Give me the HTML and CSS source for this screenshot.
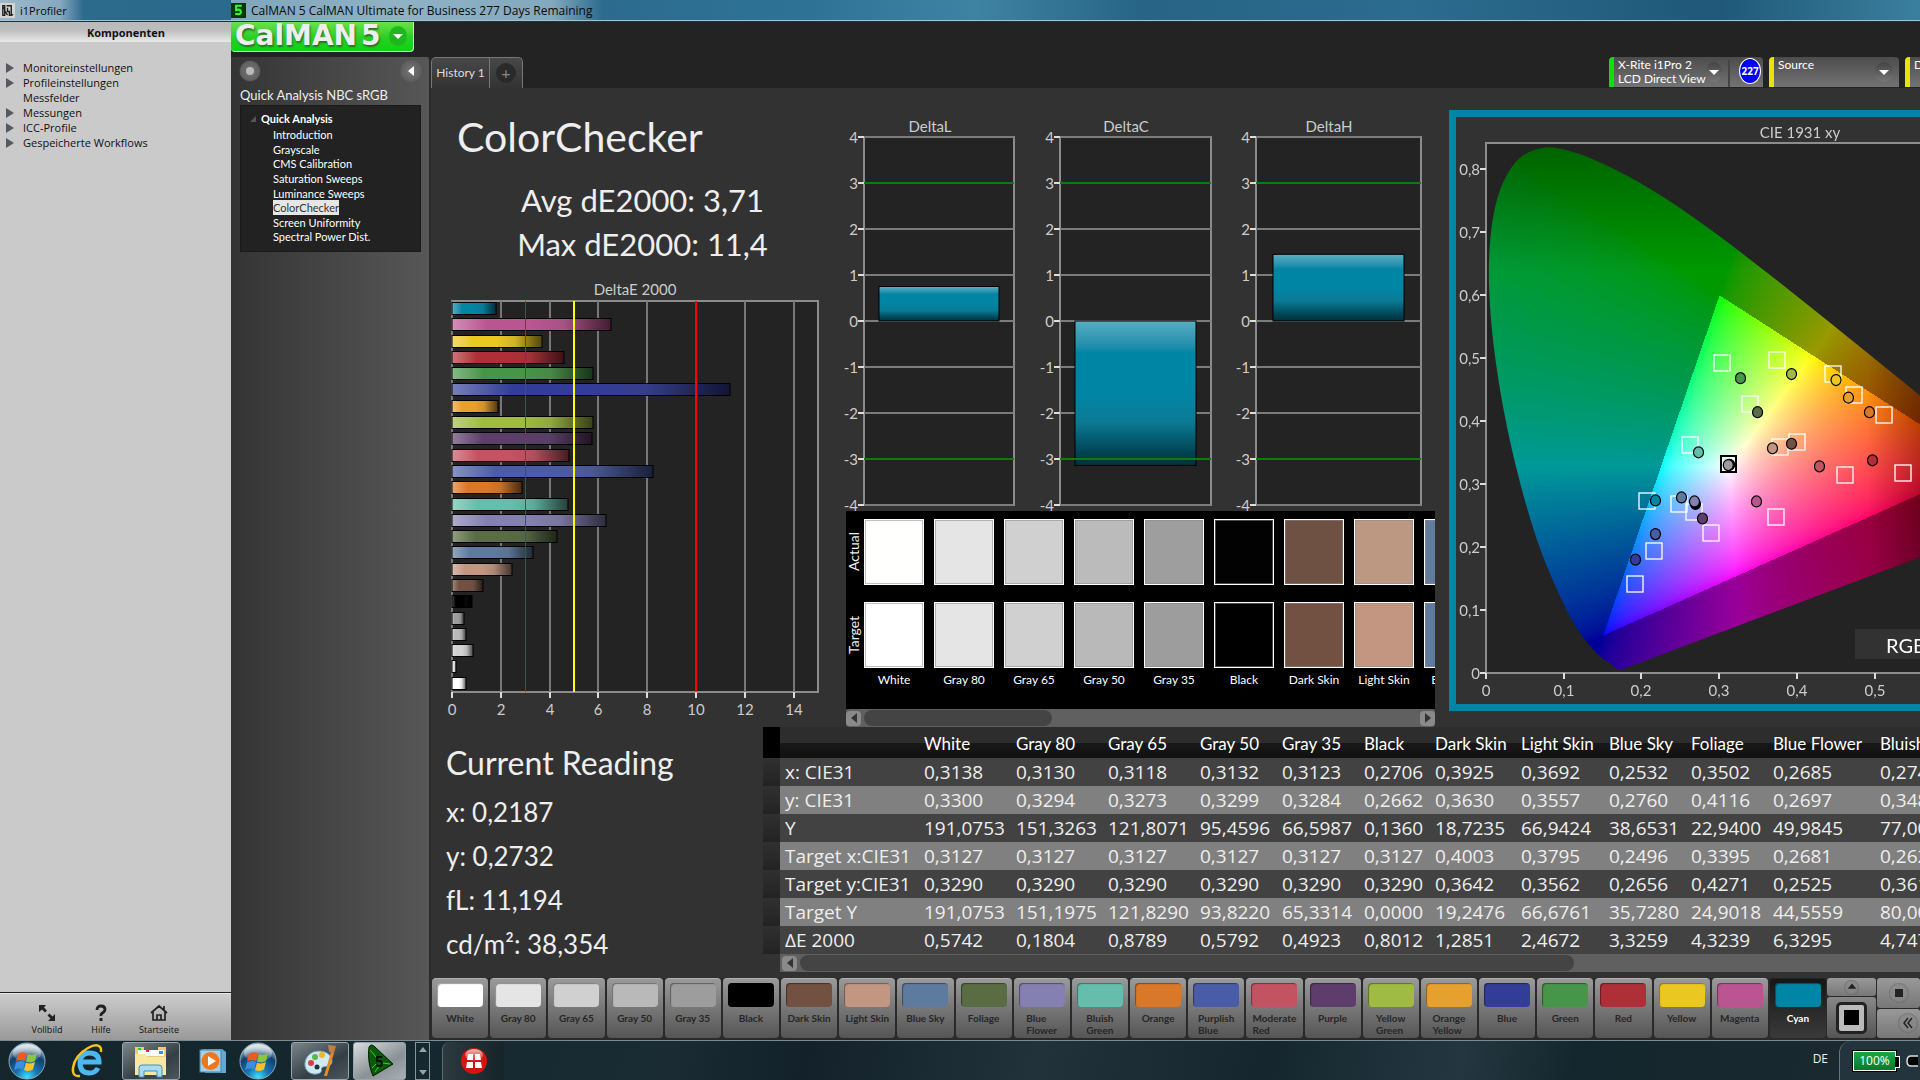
FILE: index.html
```html
<!DOCTYPE html>
<html lang="de">
<head>
<meta charset="utf-8">
<title>CalMAN 5 – ColorChecker</title>
<link rel="stylesheet" href="styles.css">
</head>
<body>
<svg class="defs" aria-hidden="true">
  <defs>
    <radialGradient id="orb" cx="50%" cy="95%" r="85%"><stop offset="0" stop-color="#3fe0ff"/><stop offset=".35" stop-color="#1678b4"/><stop offset=".75" stop-color="#123f6c"/><stop offset="1" stop-color="#9fb6c6"/></radialGradient>
    <linearGradient id="shine" x1="0" y1="0" x2="0" y2="1"><stop offset="0" stop-color="#fff" stop-opacity=".7"/><stop offset="1" stop-color="#fff" stop-opacity=".08"/></linearGradient>
    <symbol id="start" viewBox="0 0 38 38">
      <circle cx="19" cy="19" r="18" fill="url(#orb)" stroke="#8fa9ba" stroke-width="1"/>
      <ellipse cx="19" cy="11" rx="14" ry="9" fill="url(#shine)"/>
      <path d="M10 12q4-3 9-.5l-2 7.500q-4-2-9 .5z" fill="#ee5a24"/>
      <path d="M20 12q4 2 9-.5l-2 7.500q-4 2.500-9 .5z" fill="#8cc63f"/>
      <path d="M8 20.500q4-2.500 9-.5l-2 7.500q-4-2-9 .5z" fill="#3d8ee0"/>
      <path d="M18 20.500q4 2 9-.5l-2 7.500q-4 2.500-9 .5z" fill="#fbc02d"/>
    </symbol>
  </defs>
</svg>
<div class="desktop">
  <aside class="profiler">
    <header class="titlebar">
      <svg class="app-icon" viewBox="0 0 16 16"><rect width="16" height="16" fill="#d4d4d4"/><path d="M3 3h2v2H3zM3 6h2v7H3zM7 3h5v10h-2V9H8V5M5 8l3 5M12 12l2 1" fill="none" stroke="#222" stroke-width="1.500"/></svg>
      <span>i1Profiler</span>
    </header>
    <h2 class="profiler-head">Komponenten</h2>
    <ul class="profiler-list">
      <li class="branch">Monitoreinstellungen</li>
      <li class="branch">Profileinstellungen</li>
      <li>Messfelder</li>
      <li class="branch">Messungen</li>
      <li class="branch">ICC-Profile</li>
      <li class="branch">Gespeicherte Workflows</li>
    </ul>
    <footer class="profiler-foot">
      <button class="foot-btn"><svg viewBox="0 0 18 18"><path d="M1 1h7L6 3.500l3 3-2 2-3-3L1 8zM17 17h-7l2.500-2.500-3-3 2-2 3 3L17 10z" fill="#222"/></svg>Vollbild</button>
      <button class="foot-btn"><svg viewBox="0 0 18 18"><path d="M5 6q0-4 4-4t4 3.500q0 2-2.200 3.300T9 12" fill="none" stroke="#222" stroke-width="2.800"/><rect x="7.500" y="14" width="3" height="3" fill="#222"/></svg>Hilfe</button>
      <button class="foot-btn"><svg viewBox="0 0 18 18"><path d="M1 9l8-7 8 7M3 8v8h12V8M7 16v-5h4v5M14 6V2" fill="none" stroke="#222" stroke-width="1.700"/></svg>Startseite</button>
    </footer>
  </aside>

  <div class="calman">
    <header class="titlebar wide">
      <svg class="app-icon" viewBox="0 0 16 16"><rect width="16" height="16" fill="#063806"/><path d="M11.500 3H5.500v4.500q5-1.500 5 2t-6 2" fill="none" stroke="#3f3" stroke-width="2.200"/></svg>
      <span>CalMAN 5 CalMAN Ultimate for Business 277 Days Remaining</span>
    </header>
    <div class="workspace">
      <nav class="topbar">
        <button class="logo"><span class="logo-name">CalMAN</span><span class="logo-name">5</span><span class="logo-drop"><i class="caret"></i></span></button>
      </nav>
      <aside class="sidebar">
        <div class="side-tools">
          <button class="round record" aria-label="Record"></button>
          <button class="round collapse" aria-label="Collapse"></button>
        </div>
        <h3 class="side-title">Quick Analysis NBC sRGB</h3>
        <ul class="tree">
          <li class="tree-head">Quick Analysis</li>
          <li><a href="#">Introduction</a></li>
          <li><a href="#">Grayscale</a></li>
          <li><a href="#">CMS Calibration</a></li>
          <li><a href="#">Saturation Sweeps</a></li>
          <li><a href="#">Luminance Sweeps</a></li>
          <li><a href="#" class="current">ColorChecker</a></li>
          <li><a href="#">Screen Uniformity</a></li>
          <li><a href="#">Spectral Power Dist.</a></li>
        </ul>
      </aside>
      <div class="tabs">
        <div class="history"><button class="tab">History 1</button><button class="tab add"><span>+</span></button></div>
        <div class="devices">
          <button class="device meter"><span>X-Rite i1Pro 2<br>LCD Direct View</span><span class="drop"><i class="caret"></i></span><b class="badge">227</b></button>
          <button class="device source"><span>Source</span><span class="drop"><i class="caret"></i></span></button>
          <button class="device display"><span>Display</span></button>
        </div>
      </div>

      <main class="board">
        <section class="upper">
          <div class="col-summary">
            <h1>ColorChecker</h1>
            <p class="stat">Avg dE2000: 3,71</p>
            <p class="stat">Max dE2000: 11,4</p>
            <svg id="de-chart" class="de-chart" width="400" height="446"></svg>
          </div>
          <div class="col-delta">
            <div class="deltas">
              <svg id="delta-l" width="196" height="423"></svg>
              <svg id="delta-c" width="196" height="423"></svg>
              <svg id="delta-h" width="204" height="423"></svg>
            </div>
            <div class="compare">
              <div class="compare-view">
                <div class="sides"><span>Actual</span><span>Target</span></div>
                <div id="pairs" class="pairs"></div>
              </div>
              <div class="scroll short"><button class="arrow left" aria-label="Left"></button><i class="thumb"></i><button class="arrow right" aria-label="Right"></button></div>
            </div>
          </div>
          <div class="cie">
            <canvas id="cie-fill" width="700" height="587"></canvas>
            <svg id="cie-chart" width="700" height="587"></svg>
          </div>
        </section>

        <section class="lower">
          <div class="reading">
            <h2>Current Reading</h2>
            <p>x: 0,2187</p>
            <p>y: 0,2732</p>
            <p>fL: 11,194</p>
            <p>cd/m²: 38,354</p>
          </div>
          <div class="data">
            <table>
              <colgroup><col class="c-grip"><col class="c-name"><col class="c92"><col class="c92"><col class="c92"><col class="c82"><col class="c82"><col class="c71"><col class="c86"><col class="c88"><col class="c82"><col class="c82"><col class="c107"><col class="c107"></colgroup>
              <thead><tr><th class="grip"></th><th></th><th>White</th><th>Gray 80</th><th>Gray 65</th><th>Gray 50</th><th>Gray 35</th><th>Black</th><th>Dark Skin</th><th>Light Skin</th><th>Blue Sky</th><th>Foliage</th><th>Blue Flower</th><th>Bluish Green</th></tr></thead>
              <tbody>
                <tr><td class="grip"></td><th>x: CIE31</th><td>0,3138</td><td>0,3130</td><td>0,3118</td><td>0,3132</td><td>0,3123</td><td>0,2706</td><td>0,3925</td><td>0,3692</td><td>0,2532</td><td>0,3502</td><td>0,2685</td><td>0,2745</td></tr>
                <tr><td class="grip"></td><th>y: CIE31</th><td>0,3300</td><td>0,3294</td><td>0,3273</td><td>0,3299</td><td>0,3284</td><td>0,2662</td><td>0,3630</td><td>0,3557</td><td>0,2760</td><td>0,4116</td><td>0,2697</td><td>0,3486</td></tr>
                <tr><td class="grip"></td><th>Y</th><td>191,0753</td><td>151,3263</td><td>121,8071</td><td>95,4596</td><td>66,5987</td><td>0,1360</td><td>18,7235</td><td>66,9424</td><td>38,6531</td><td>22,9400</td><td>49,9845</td><td>77,0012</td></tr>
                <tr><td class="grip"></td><th>Target x:CIE31</th><td>0,3127</td><td>0,3127</td><td>0,3127</td><td>0,3127</td><td>0,3127</td><td>0,3127</td><td>0,4003</td><td>0,3795</td><td>0,2496</td><td>0,3395</td><td>0,2681</td><td>0,2626</td></tr>
                <tr><td class="grip"></td><th>Target y:CIE31</th><td>0,3290</td><td>0,3290</td><td>0,3290</td><td>0,3290</td><td>0,3290</td><td>0,3290</td><td>0,3642</td><td>0,3562</td><td>0,2656</td><td>0,4271</td><td>0,2525</td><td>0,3616</td></tr>
                <tr><td class="grip"></td><th>Target Y</th><td>191,0753</td><td>151,1975</td><td>121,8290</td><td>93,8220</td><td>65,3314</td><td>0,0000</td><td>19,2476</td><td>66,6761</td><td>35,7280</td><td>24,9018</td><td>44,5559</td><td>80,0034</td></tr>
                <tr><td class="grip"></td><th>ΔE 2000</th><td>0,5742</td><td>0,1804</td><td>0,8789</td><td>0,5792</td><td>0,4923</td><td>0,8012</td><td>1,2851</td><td>2,4672</td><td>3,3259</td><td>4,3239</td><td>6,3295</td><td>4,7473</td></tr>
              </tbody>
            </table>
            <div class="scroll long"><button class="arrow left" aria-label="Left"></button><i class="thumb"></i></div>
          </div>
        </section>

        <section class="strip">
          <div id="patches" class="patches"></div>
          <div class="pager">
            <button class="pager-up" aria-label="Up"><span class="knob"><svg viewBox="0 0 16 16"><path d="M8 4l5 6H3z" fill="#222"/></svg></span></button>
            <button class="pager-view" aria-label="Pattern"><span class="pattern"></span></button>
          </div>
          <div class="controls">
            <button aria-label="Stop"><span class="knob"><svg viewBox="0 0 16 16"><rect x="4" y="4" width="8" height="8" fill="#222"/></svg></span></button>
            <button aria-label="Back" class="back"><span class="knob"><svg viewBox="0 0 16 16"><path d="M8 3L4 8l4 5M12 3L8 8l4 5" fill="none" stroke="#222" stroke-width="1.500"/></svg></span></button>
          </div>
        </section>
      </main>
    </div>
  </div>

  <footer class="taskbar">
    <div class="task-left">
      <button class="task" aria-label="Start"><svg width="38" height="38"><use href="#start"/></svg></button>
      <button class="task" aria-label="Internet Explorer"><svg width="34" height="36" viewBox="0 0 34 36"><path d="M8 19h20q0-9-9.500-9T9 20t9.500 10q6 0 8.500-5" fill="none" stroke="#4db8ee" stroke-width="5"/><path d="M30 9C31 1 24 1 17 5 8 10 3 18 2 25q-1 9 7 8" fill="none" stroke="#f3c21b" stroke-width="2.500"/></svg></button>
      <button class="task framed" aria-label="Explorer"><svg width="36" height="34" viewBox="0 0 36 34"><path d="M2 8V3h9v3h14V3h8v28H2z" fill="#e8cf6f"/><path d="M5 6h26v6H5z" fill="#fff"/><path d="M5 4h3v2H5z" fill="#2c3"/><path d="M13 5h3v3h-3z" fill="#d33"/><path d="M26 7h4v3h-4z" fill="#29f"/><path d="M2 10h10l3 3h18v18H2z" fill="#f7e7a1"/><path d="M6 33v-9q0-3 3-3h17q3 0 3 3v9h-5v-6H11v6z" fill="#a9dcf2" stroke="#3f90bd"/></svg></button>
      <button class="task" aria-label="Media Player"><svg width="28" height="28" viewBox="0 0 28 28"><path d="M3 2h20l4 3v21H6z" fill="#5fa9d2"/><rect x="1" y="3" width="21" height="22" fill="#a4cfe6" stroke="#4786a8"/><circle cx="11.500" cy="14" r="9" fill="#f0761c"/><path d="M9 9l8 5-8 5z" fill="#fff"/></svg></button>
    </div>
    <div class="task-right">
      <button class="task" aria-label="Start"><svg width="38" height="38"><use href="#start"/></svg></button>
      <button class="task framed" aria-label="Paint"><svg width="34" height="36" viewBox="0 0 34 36"><path d="M16 8C6 8 1 16 2 23s9 10 15 7c3-2 0-5 3-6 5-1 9-1 9-6 0-6-6-10-13-10z" fill="#cfe9f5" stroke="#6aa0b8"/><circle cx="8" cy="20" r="3" fill="#d9413d"/><circle cx="12" cy="14" r="3" fill="#58b947"/><circle cx="19" cy="12" r="3" fill="#f2b62c"/><circle cx="14" cy="24" r="2.500" fill="#1b3440"/><path d="M21 33L28 9l3 1-7 23z" fill="#e98a22"/><path d="M26 9l-1-7 8 1-2 7z" fill="#b9814c"/></svg></button>
      <button class="task framed bright" aria-label="CalMAN"><svg width="30" height="34" viewBox="0 0 30 34"><path d="M4 3q2-4 6 0l18 17-20 12Q2 18 4 3z" fill="#0a5a0a" stroke="#001a00"/><path d="M5 6l6 7M10 28l4-6M25 20l-7-1M7 24l4-4" stroke="#2fd82f"/><path d="M17 13h-5v4q5-1 5 2.500t-6 2" fill="none" stroke="#001400" stroke-width="2"/></svg></button>
      <span class="spinner"><i></i><i></i></span>
      <button class="task dim" aria-label="App"><svg width="28" height="28" viewBox="0 0 28 28"><circle cx="14" cy="14" r="13" fill="#d4150e"/><ellipse cx="14" cy="8" rx="9" ry="6" fill="url(#shine)"/><path d="M8 7h5v6H7zM15 7h5l1 6h-6zM7 15h6v6H6zM15 15h6l1 6h-7z" fill="#fff"/></svg></button>
      <span class="lang">DE</span>
      <div class="tray"><span class="battery">100%</span><svg width="14" height="14" viewBox="0 0 14 14"><path d="M13 2H6Q2 2 2 7t4 5h7" fill="#000" stroke="#ddd" stroke-width="1.500"/></svg></div>
    </div>
  </footer>
</div>
<script src="script.js"></script>
</body>
</html>
```
FILE: styles.css
```css
* { box-sizing: border-box; }
:root {
  --ui: "Open Sans", "Noto Sans", sans-serif;
  --face: Lato, "Open Sans", sans-serif;
}
html, body { height: 100%; }
body { margin: 0; overflow: hidden; background: #232323; color: #eee; font-family: var(--face); }
h1, h2, h3, p, ul { margin: 0; padding: 0; font-weight: 400; }
ul { list-style: none; }
button { border: 0; margin: 0; padding: 0; background: none; color: inherit; font: inherit; }
svg, canvas { display: block; }
.defs { position: absolute; width: 0; height: 0; }

.desktop { display: grid; grid-template: minmax(0, 1fr) 40px / 231px minmax(0, 1fr); height: 100vh; }

/* window title bars */
.titlebar { display: flex; align-items: center; gap: 5px; height: 22px; flex: none; border-bottom: 1px solid #24313b; color: #0a0a0a; font: 11px/16px var(--ui); background: linear-gradient(90deg, #9db9ca, #86a9bf 26%, #2d6b8d 36%, #2b6a8c); box-shadow: inset 0 -1px #9ec3d6; white-space: nowrap; }
.titlebar.wide { font-size: 12px; background: linear-gradient(90deg, #7fa6bc, #8fb2c5 10%, #83a9be 19%, #2c6b8e 22%, #2e7396 34%, #3f83a3 44%, #276486 54%, #2c6c8e 70%, #1f5878 88%, #3b7f9e); }
.app-icon { width: 15px; height: 15px; }

/* i1Profiler */
.profiler { display: flex; flex-direction: column; background: #cacaca; color: #111; }
.profiler-head { height: 20px; font: 700 11px/21px var(--ui); text-align: center; padding-left: 21px; background: linear-gradient(#b9b9b9, #bdbdbd 40%, #e9e9e9); }
.profiler-list { flex: 1; padding: 18px 0 0 23px; font: 11px/15px var(--ui); }
.profiler-list .branch::before { content: ""; float: left; margin: 3px 0 0 -17px; border: 5px solid transparent; border-left: 8px solid #555a60; border-right: 0; }
.profiler-foot { display: flex; height: 48px; padding-left: 20px; border-top: 1px solid #222; box-shadow: inset 0 1px #e8e8e8; background: linear-gradient(#cecece, #999); }
.foot-btn { display: flex; flex-direction: column; align-items: center; width: 54px; padding-top: 11px; font: 9px/16px var(--ui); }
.foot-btn:last-child { width: 62px; }
.foot-btn svg { width: 18px; height: 18px; }

/* CalMAN window */
.calman { display: flex; flex-direction: column; min-width: 0; min-height: 0; }
.workspace { flex: 1; display: grid; grid-template: 35px 31px minmax(0, 1fr) / 200px minmax(0, 1fr); min-height: 0; background: #232323; }
.topbar { grid-column: 1 / 3; }
.logo { display: flex; align-items: center; gap: 4px; width: 183px; height: 30px; padding: 0 0 1px 4px; border: 1px solid #c6f5c0; border-top: 0; border-left: 0; border-radius: 0 0 4px 4px; background: linear-gradient(#6ee04b, #28cf22 55%, #0fd312); font: 700 28px/28px "DejaVu Sans", sans-serif; color: #eee; text-shadow: 1px 2px 2px #2b6d2b; }
.logo-drop { display: grid; place-items: center; width: 18px; height: 20px; margin-left: 4px; border-radius: 50%; background: #1cb81c; }
.caret { border: 5px solid transparent; border-top-color: #fff; border-bottom: 0; }

.sidebar { grid-row: 2 / 4; padding: 4px 8px 0 9px; border-radius: 0 4px 0 0; border-right: 2px solid #2a2a2a; background: linear-gradient(90deg, #343434, #575757); font: 11px/14px var(--face); }
.side-tools { display: flex; justify-content: space-between; }
.round { width: 20px; height: 20px; border-radius: 50%; background: radial-gradient(#777, #555); box-shadow: 0 0 1px #999; display: grid; place-items: center; }
.record::after { content: ""; width: 8px; height: 8px; border-radius: 50%; background: #bbb; }
.collapse::after { content: ""; border: 5px solid transparent; border-right: 6px solid #fff; border-left: 0; }
.side-title { font: 13px/16px var(--face); margin-top: 6px; white-space: nowrap; }
.tree { display: grid; grid-template-rows: 17px repeat(8, minmax(0, 1fr)); margin-top: 2px; height: 147px; padding: 4px 0 7px 20px; background: #222; border: 1px solid #1a1a1a; font: 11px/15px var(--face); color: #fff; }
.tree li + li { padding-left: 12px; }
.tree .tree-head { font-weight: 700; line-height: 17px; }
.tree-head::before { content: ""; float: left; margin: 6px 0 0 -11px; border: 3px solid transparent; border-right-color: #555; border-bottom-color: #555; }
.tree a { color: inherit; text-decoration: none; }
.tree a.current { background: #e6e6e6; color: #333; display: inline-block; height: 15px; }

.tabs { display: flex; justify-content: space-between; min-width: 0; overflow: hidden; }
.history, .devices { display: flex; }
.tab { height: 31px; width: 59px; border: 1px solid #777; border-bottom: 0; background: linear-gradient(#484848, #333); font: 12px/28px var(--face); color: #ddd; border-radius: 5px 0 0 0; }
.tab.add { width: 33px; border-left: 0; border-radius: 0 5px 0 0; display: grid; place-items: center; color: #888; }
.tab.add span { width: 20px; height: 20px; border-radius: 50%; background: #2a2a2a; line-height: 20px; font-size: 16px; }
.devices { gap: 6px; }
.device { display: flex; align-items: flex-start; height: 30px; padding: 1px 5px 0 4px; border-left: 5px solid #0be00b; border-radius: 4px 4px 0 0; background: linear-gradient(#4c4c4c, #737373); font: 12px/14px var(--face); text-align: left; color: #fff; white-space: nowrap; }
.meter { width: 154px; padding-right: 2px; }
.meter > span:first-child { flex: 1; }
.meter { background: linear-gradient(#444, #444) 114px 3px / 2px 27px no-repeat, linear-gradient(#4c4c4c, #737373); }
.drop { display: grid; place-items: center; width: 20px; height: 20px; margin-top: 4px; border-radius: 50%; background: linear-gradient(#444, #777); }
.badge { display: grid; place-items: center; width: 26px; height: 26px; border: 1px solid #fff; border-radius: 50%; background: #00f; font: 700 10px/12px var(--ui); margin: 0 0 0 17px; }
.source, .display { border-left-color: #e6e600; }
.source { width: 130px; justify-content: space-between; }
.display { width: 15px; overflow: hidden; padding-right: 0; border-radius: 4px 0 0 0; }

/* board */
.board { display: flex; flex-direction: column; min-width: 0; min-height: 0; background: #323232; overflow: hidden; }
.upper { display: flex; height: 639px; flex: none; }
.col-summary { width: 409px; flex: none; display: flex; flex-direction: column; }
.col-summary h1 { font-size: 41px; line-height: 56px; height: 70px; padding: 21px 0 0 26px; }
.stat { font-size: 31px; line-height: 44px; text-align: center; padding-left: 14px; }
.col-summary h1 + .stat { margin-top: 20px; }
.de-chart { margin-top: auto; }
.col-delta { width: 596px; flex: none; }
.deltas { display: flex; }
.compare { margin-left: 6px; width: 589px; }
.compare-view { display: flex; height: 198px; padding-top: 8px; background: #000; overflow: hidden; }
.sides { width: 18px; flex: none; font: 14px/16px var(--face); }
.sides span { display: block; height: 83px; writing-mode: vertical-rl; transform: rotate(180deg); text-align: center; padding-top: 18px; }
.pairs { display: flex; gap: 10px; }
.pair { width: 60px; flex: none; text-align: center; font: 12px/16px var(--face); color: #fff; white-space: nowrap; }
.chip { display: block; height: 66px; border: 1px solid #fff; box-shadow: inset 0 0 0 1px #8888; }
.chip + .chip { margin: 17px 0 4px; }
.scroll { display: flex; align-items: center; height: 18px; background: #606060; border-radius: 3px; }
.arrow { width: 15px; height: 15px; border-radius: 4px; background: #8a8a8a; display: grid; place-items: center; }
.arrow::after { content: ""; border: 5px solid transparent; }
.arrow.left::after { border-right: 6px solid #333; border-left: 0; }
.arrow.right::after { border-left: 6px solid #333; border-right: 0; }
.thumb { height: 16px; margin-left: 3px; border-radius: 8px; background: #444; }
.short .thumb { width: 32%; }
.arrow.right { margin-left: auto; }
.long { margin-left: 17px; padding-left: 2px; border-radius: 0; }
.long .thumb { width: 68%; }
.cie { flex: 1; min-width: 0; display: grid; grid-template-columns: 700px; margin: 22px 0 16px 13px; border: 7px solid #0085a5; border-right: 0; overflow: hidden; }
.cie > * { grid-area: 1 / 1; }
svg text { font-family: var(--face); font-size: 15px; fill: #ccc; }

.lower { display: flex; height: 251px; flex: none; }
.reading { width: 332px; flex: none; padding: 12px 0 0 15px; font-size: 26px; line-height: 44px; }
.reading h2 { font-size: 32px; line-height: 48px; height: 51px; }
.data { flex: 1; min-width: 0; overflow: hidden; }
table { table-layout: fixed; width: 1219px; border-collapse: collapse; font: 19px/26px var(--ui); color: #eee; text-align: left; }
.c-grip { width: 17px; } .c-name { width: 139px; } .c92 { width: 92px; } .c82 { width: 82px; } .c71 { width: 71px; } .c86 { width: 86px; } .c88 { width: 88px; } .c107 { width: 107px; }
td, th { padding: 0 0 0 5px; height: 28px; font-weight: 400; white-space: nowrap; }
thead th { height: 31px; padding-top: 2px; font: 17px/28px var(--face); color: #fff; background: linear-gradient(#2d2d2d 50%, #181818 52%, #111); }
tbody tr { background: #424242; }
tbody tr:nth-child(even) { background: #808080; }
tbody .grip { background: linear-gradient(#303030, #232323); }
thead .grip { background: #000; }

.strip { display: flex; flex: 1; min-height: 0; padding-bottom: 2px; background: #2a2a2a; }
.patches { flex: 1; display: grid; grid-template-columns: repeat(24, minmax(0, 1fr)); }
.patch { display: flex; flex-direction: column; align-items: center; margin: 0 1px; height: 60px; padding-top: 4px; border-top: 1px solid #b0b0b0; border-radius: 4px; background: linear-gradient(#999, #555); color: #262626; font: 700 10px/12px var(--face); text-align: left; }
.patch i { width: 46px; height: 24px; border-radius: 4px; margin-bottom: 5px; box-shadow: inset 1px 1px 1px #0006; flex: none; }
.patch.on { background: linear-gradient(#161616, #3a3a3a); border-top-color: #222; color: #fff; }
.pager { width: 49px; display: flex; flex-direction: column; gap: 1px; }
.pager button, .controls button { display: grid; place-items: center; border-radius: 3px; background: linear-gradient(#999, #777); }
.pager-up { height: 18px; }
.pager .pager-view { flex: 1; background: linear-gradient(#888, #555); }
.pattern { width: 31px; height: 32px; border: 3px solid #222; border-radius: 5px; background: linear-gradient(#000, #000) center / 15px 15px no-repeat, #bbb; }
.controls { width: 43px; display: grid; gap: 1px; margin-left: 1px; }
.controls .back { padding-left: 18px; }
.knob { display: grid; place-items: center; width: 20px; height: 20px; border-radius: 50%; background: #8888; box-shadow: inset 0 0 2px #555; }
.pager .knob { width: 15px; height: 15px; }
.knob svg { width: 16px; height: 16px; }
.pager .knob svg { width: 14px; height: 14px; }

/* taskbar */
.taskbar { grid-column: 1 / 3; display: grid; grid-template-columns: 231px minmax(0, 1fr); border-top: 1px solid #7d8a92; background: linear-gradient(100deg, #15252c, #14282f 20%, #1a2b33 35%, #12212a 42%, #22323a 54%, #15262e 66%, #243740 76%, #14262d 82%, #1c2a31); }
.task-left, .task-right { display: flex; align-items: center; }
.task { display: grid; place-items: center; width: 58px; height: 38px; flex: none; }
.framed { border: 1px solid #9aa4a8; border-radius: 3px; background: linear-gradient(150deg, #7a868a, #333f44 60%, #4a575c); }
.bright { width: 53px; margin-left: 4px; background: linear-gradient(150deg, #d8dcde, #8a9296 60%, #a8b0b4); }
.task-left .task:first-child { width: 54px; }
.task-left .task:nth-child(2) { width: 68px; }
.task-left .task:nth-child(4) { width: 51px; padding-left: 14px; }
.task-right .task:first-child { width: 54px; margin-right: 6px; }
.spinner { width: 15px; height: 38px; margin: 0 12px 0 9px; border: 1px solid #89949a; display: flex; flex-direction: column; justify-content: space-between; align-items: center; padding: 4px 0; }
.spinner i { border: 4px solid transparent; border-bottom: 5px solid #99a3a8; border-top: 0; }
.spinner i + i { border-top: 5px solid #99a3a8; border-bottom: 0; }
.dim { width: 62px; border-left: 1px solid #5d6a70; border-radius: 8px 0 0 0; background: linear-gradient(90deg, #2c3a40, #16242a); }
.lang { margin: 0 11px 4px auto; font: 12px/16px var(--ui); }
.tray { display: flex; align-items: center; gap: 9px; width: 81px; height: 39px; padding-left: 13px; border-left: 1px solid #66747b; border-radius: 12px 0 0 0; background: #24343c; overflow: hidden; }
.tray svg { flex: none; }
.battery { position: relative; flex: none; width: 43px; height: 20px; border: 1px solid #fff; outline: 1px solid #000; background: linear-gradient(#1ca545, #087a2b); font: 12px/17px var(--ui); text-align: center; color: #fff; }
.battery::after { content: ""; position: absolute; right: -5px; top: 4px; width: 4px; height: 10px; border: 1px solid #fff; border-left: 0; background: #000; }
```
FILE: script.js
```js
const NS = 'http://www.w3.org/2000/svg';

// ColorChecker patches: name, target colour, measured colour, dE2000
const patches = [
  ['White', '#ffffff', '#fffffd', 0.57], ['Gray 80', '#e5e5e5', '#e5e5e5', 0.18],
  ['Gray 65', '#d0d0d0', '#d0d0d0', 0.88], ['Gray 50', '#b9b9b9', '#bbbbbb', 0.58],
  ['Gray 35', '#9d9d9d', '#9e9e9e', 0.49], ['Black', '#000000', '#020203', 0.80],
  ['Dark Skin', '#735142', '#6e5142', 1.29], ['Light Skin', '#c39682', '#bc9882', 2.47],
  ['Blue Sky', '#5e7b9f', '#627d9c', 3.33], ['Foliage', '#596c43', '#596c43', 4.32],
  ['Blue Flower', '#8480b1', '#8480b1', 6.33], ['Bluish Green', '#65beab', '#65beab', 4.75],
  ['Orange', '#d97829', '#d97829', 2.85], ['Purplish Blue', '#4a5ca5', '#4a5ca5', 8.25],
  ['Moderate Red', '#c35362', '#c35362', 4.8], ['Purple', '#5d3d6b', '#5d3d6b', 5.72],
  ['Yellow Green', '#9fbb41', '#9fbb41', 5.76], ['Orange Yellow', '#e6a02d', '#e6a02d', 1.87],
  ['Blue', '#333c96', '#333c96', 11.4], ['Green', '#479549', '#479549', 5.76],
  ['Red', '#af2f38', '#af2f38', 4.57], ['Yellow', '#ebc722', '#ebc722', 3.7],
  ['Magenta', '#ba5591', '#ba5591', 6.52], ['Cyan', '#0085a5', '#0085a5', 1.82],
];

function add(parent, tag, attrs, text) {
  const el = document.createElementNS(NS, tag);
  for (const k in attrs) el.setAttribute(k, attrs[k]);
  if (text !== undefined) el.textContent = text;
  parent.appendChild(el);
  return el;
}
const line = (svg, x1, y1, x2, y2, stroke, w = 1) =>
  add(svg, 'line', { x1, y1, x2, y2, stroke, 'stroke-width': w, 'shape-rendering': 'crispEdges' });
const label = (svg, x, y, text, anchor = 'middle') =>
  add(svg, 'text', { x, y, 'text-anchor': anchor }, text);

function gloss(svg, id, color, vertical) {
  const g = add(svg, 'linearGradient', vertical ? { id, x1: 0, y1: 0, x2: 0, y2: 1 } : { id });
  add(g, 'stop', { offset: 0, 'stop-color': `color-mix(in srgb, ${color} 66%, white)` });
  add(g, 'stop', { offset: 0.22, 'stop-color': color });
  add(g, 'stop', { offset: 0.5, 'stop-color': color });
  add(g, 'stop', { offset: 0.7, 'stop-color': `color-mix(in srgb, ${color} 84%, #444)` });
  add(g, 'stop', { offset: 1, 'stop-color': `color-mix(in srgb, ${color} 35%, black)` });
}

function drawDeltaE() {
  const svg = document.getElementById('de-chart');
  const left = 21, top = 20, width = 366, height = 391, unit = 24.4;
  label(svg, 204, 14, 'DeltaE 2000');
  add(svg, 'rect', { x: left, y: top, width, height, fill: '#232323', stroke: '#8c8c8c', 'stroke-width': 2 });
  for (let v = 0; v <= 14; v += 2) {
    const x = Math.round(left + v * unit);
    line(svg, x, top, x, top + height, '#777', 2);
    line(svg, x, top + height, x, top + height + 6, '#ddd', 2);
    label(svg, x, top + height + 23, v);
  }
  const pitch = height / patches.length;
  [...patches].reverse().forEach(([, color, , de], i) => {
    gloss(svg, 'bar' + i, color, false);
    add(svg, 'rect', { x: left, y: Math.round(top + 1 + i * pitch) + 0.5, width: Math.round(de * unit), height: 12, fill: `url(#bar${i})`, stroke: '#000' });
  });
  [[3, '#0a7a0a', 1], [5, '#ff0', 2], [10, '#f00', 2]].forEach(([v, c, w]) => {
    const x = Math.round(left + v * unit);
    line(svg, x, top, x, top + height, c, w);
  });
}

function drawDelta(id, title, value, plotWidth, inset, titleX) {
  const svg = document.getElementById(id);
  const left = 24, top = 49, unit = 46, zero = top + 4 * unit;
  label(svg, titleX, 44, title);
  add(svg, 'rect', { x: left, y: top, width: plotWidth, height: unit * 8, fill: '#232323', stroke: '#8c8c8c', 'stroke-width': 2 });
  for (let v = 4; v >= -4; v--) {
    const y = zero - v * unit;
    line(svg, left, y, left + plotWidth, y, '#7c7c7c', 2);
    line(svg, left - 6, y, left, y, '#ddd', 2);
    label(svg, left - 6, y + 6, v, 'end');
  }
  gloss(svg, id + '-fill', '#0085a5', true);
  add(svg, 'rect', { x: left + inset, y: value > 0 ? zero - value * unit : zero, width: plotWidth - 2 * inset, height: Math.abs(value) * unit, fill: `url(#${id}-fill)`, stroke: '#000' });
  [3, -3].forEach(v => line(svg, left, zero - v * unit, left + plotWidth, zero - v * unit, '#107a10', 2));
}

const locus = [[.1741,.005],[.1738,.0049],[.1733,.0048],[.1726,.0048],[.1714,.0051],[.1689,.0069],[.1644,.0109],[.1566,.0177],[.144,.0297],[.1241,.0578],[.1096,.0868],[.0913,.1327],[.0687,.2007],[.0454,.295],[.0235,.4127],[.0082,.5384],[.0039,.6548],[.0139,.7502],[.0389,.812],[.0743,.8338],[.1142,.8262],[.1547,.8059],[.1929,.7816],[.2296,.7543],[.2658,.7243],[.3016,.6923],[.3373,.6589],[.3731,.6245],[.4087,.5896],[.4441,.5547],[.4788,.5202],[.5125,.4866],[.5448,.4544],[.5752,.4242],[.6029,.3965],[.627,.3725],[.6482,.3514],[.6658,.334],[.6915,.3083],[.7079,.292],[.7347,.2653]];
const CX = 30, CY = 556, SX = 777, SY = 630;
const px = x => CX + x * SX, py = y => CY - y * SY;

function fillGamut() {
  const canvas = document.getElementById('cie-fill');
  const W = canvas.width, H = canvas.height;
  const ctx = canvas.getContext('2d');
  const layer = document.createElement('canvas');
  layer.width = W; layer.height = H;
  const lctx = layer.getContext('2d');
  const img = lctx.createImageData(W, H);
  for (let j = 0; j < H; j++) for (let i = 0; i < W; i++) {
    const x = (i - CX) / SX, y = Math.max((CY - j) / SY, 0.0005);
    const X = x / y, Z = (1 - x - y) / y;
    const rgb = [3.2406 * X - 1.5372 - 0.4986 * Z, -0.9689 * X + 1.8758 + 0.0415 * Z, 0.0557 * X - 0.204 + 1.057 * Z];
    const inside = Math.min(...rgb) >= -0.0005;
    const max = Math.max(...rgb);
    let k = inside ? 1 : 0.6;
    if (x > 0.49) k *= Math.max(0.45, 1 - (x - 0.49) * 4);
    if (!inside && y > 0.64) k *= 1 - (y - 0.64) * 1.8;
    const o = (j * W + i) * 4;
    for (let c = 0; c < 3; c++) img.data[o + c] = 255 * k * Math.pow(Math.max(rgb[c], 0) / max, 1 / 1.6);
    img.data[o + 3] = 255;
  }
  lctx.putImageData(img, 0, 0);
  ctx.fillStyle = '#323232';
  ctx.fillRect(0, 0, W, H);
  ctx.fillStyle = '#232323';
  ctx.fillRect(CX, 26, W, CY - 26);
  // Catmull-Rom curve through the locus points
  const pts = locus.map(([x, y]) => [px(x), py(y)]);
  ctx.beginPath();
  ctx.moveTo(...pts[0]);
  for (let i = 0; i < pts.length - 1; i++) {
    const a = pts[Math.max(i - 1, 0)], b = pts[i], c = pts[i + 1], d = pts[Math.min(i + 2, pts.length - 1)];
    ctx.bezierCurveTo(b[0] + (c[0] - a[0]) / 6, b[1] + (c[1] - a[1]) / 6, c[0] - (d[0] - b[0]) / 6, c[1] - (d[1] - b[1]) / 6, c[0], c[1]);
  }
  ctx.closePath();
  ctx.clip();
  ctx.drawImage(layer, 0, 0);
}

function drawCie() {
  const svg = document.getElementById('cie-chart');
  label(svg, 344, 21, 'CIE 1931 xy');
  line(svg, CX, 26, 700, 26, '#8c8c8c', 2);
  line(svg, CX, 25, CX, CY, '#8c8c8c', 2);
  line(svg, CX, CY, 700, CY, '#8c8c8c', 2);
  const name = v => v === 0 ? '0' : '0,' + v;
  for (let v = 0; v <= 8; v++) {
    const y = Math.round(py(v / 10));
    line(svg, CX - 6, y, CX, y, '#ddd', 2);
    label(svg, CX - 6, y + 6, name(v), 'end');
    if (v > 5) continue;
    const x = Math.round(px(v / 10));
    line(svg, x, CY, x, CY + 6, '#ddd', 2);
    label(svg, x, CY + 23, name(v));
  }
  [[.304,.492],[.375,.497],[.447,.475],[.474,.442],[.512,.409],[.3395,.4271],[.2626,.3616],[.4003,.3660],[.3785,.3590],[.4615,.3137],[.537,.318],[.3727,.2484],[.2066,.2723],[.2490,.2675],[.2683,.2548],[.2902,.2221],[.2156,.1943],[.1924,.1417]].forEach(([x, y]) =>
    add(svg, 'rect', { x: Math.round(px(x)) - 8, y: Math.round(py(y)) - 8, width: 16, height: 16, fill: 'none', stroke: '#fff' , 'stroke-width': 1.3 }));
  add(svg, 'rect', { x: 265, y: 339, width: 15, height: 16, fill: 'none', stroke: '#000', 'stroke-width': 2 });
  [[.3275,.468,19],[.3932,.4745,16],[.4505,.465,21],[.4665,.437,17],[.4935,.414,12],[.3495,.4140,9],[.2735,.3503,11],[.3687,.3567,7],[.3932,.3639,6],[.4292,.328,14],[.4974,.3376,20],[.3481,.2723,22],[.2181,.2739,23],[.2516,.2787,8],[.2696,.2683,5],[.2683,.2723,10],[.2786,.2452,15],[.2181,.2205,13],[.1924,.1799,18],[.3135,.3305,5],[.3118,.330,4]].forEach(([x, y, i]) =>
    add(svg, 'ellipse', { cx: px(x), cy: py(y), rx: 5, ry: 5.5, fill: patches[i][1], stroke: '#000', 'stroke-width': 1.2 }));
  add(svg, 'rect', { x: 399, y: 512, width: 240, height: 30, fill: '#323232' });
  add(svg, 'text', { x: 430, y: 536, style: 'font-size:20px;fill:#fff' }, 'RGB Triangle');
}

function fillLists() {
  document.getElementById('pairs').innerHTML = patches.slice(0, 9).map(([name, target, actual]) =>
    `<div class="pair"><i class="chip" style="background:${actual}"></i><i class="chip" style="background:${target}"></i>${name}</div>`).join('');
  document.getElementById('patches').innerHTML = patches.map(([name, color], i) => {
    const text = i > 9 ? name.replace(' ', '<br>') : name;
    return `<button class="patch${name === 'Cyan' ? ' on' : ''}"><i style="background:${color}"></i><span>${text}</span></button>`;
  }).join('');
}

fillLists();
drawDeltaE();
drawDelta('delta-l', 'DeltaL', 0.75, 150, 15, 90);
drawDelta('delta-c', 'DeltaC', -3.14, 151, 15, 90);
drawDelta('delta-h', 'DeltaH', 1.45, 165, 17, 97);
fillGamut();
drawCie();
```
